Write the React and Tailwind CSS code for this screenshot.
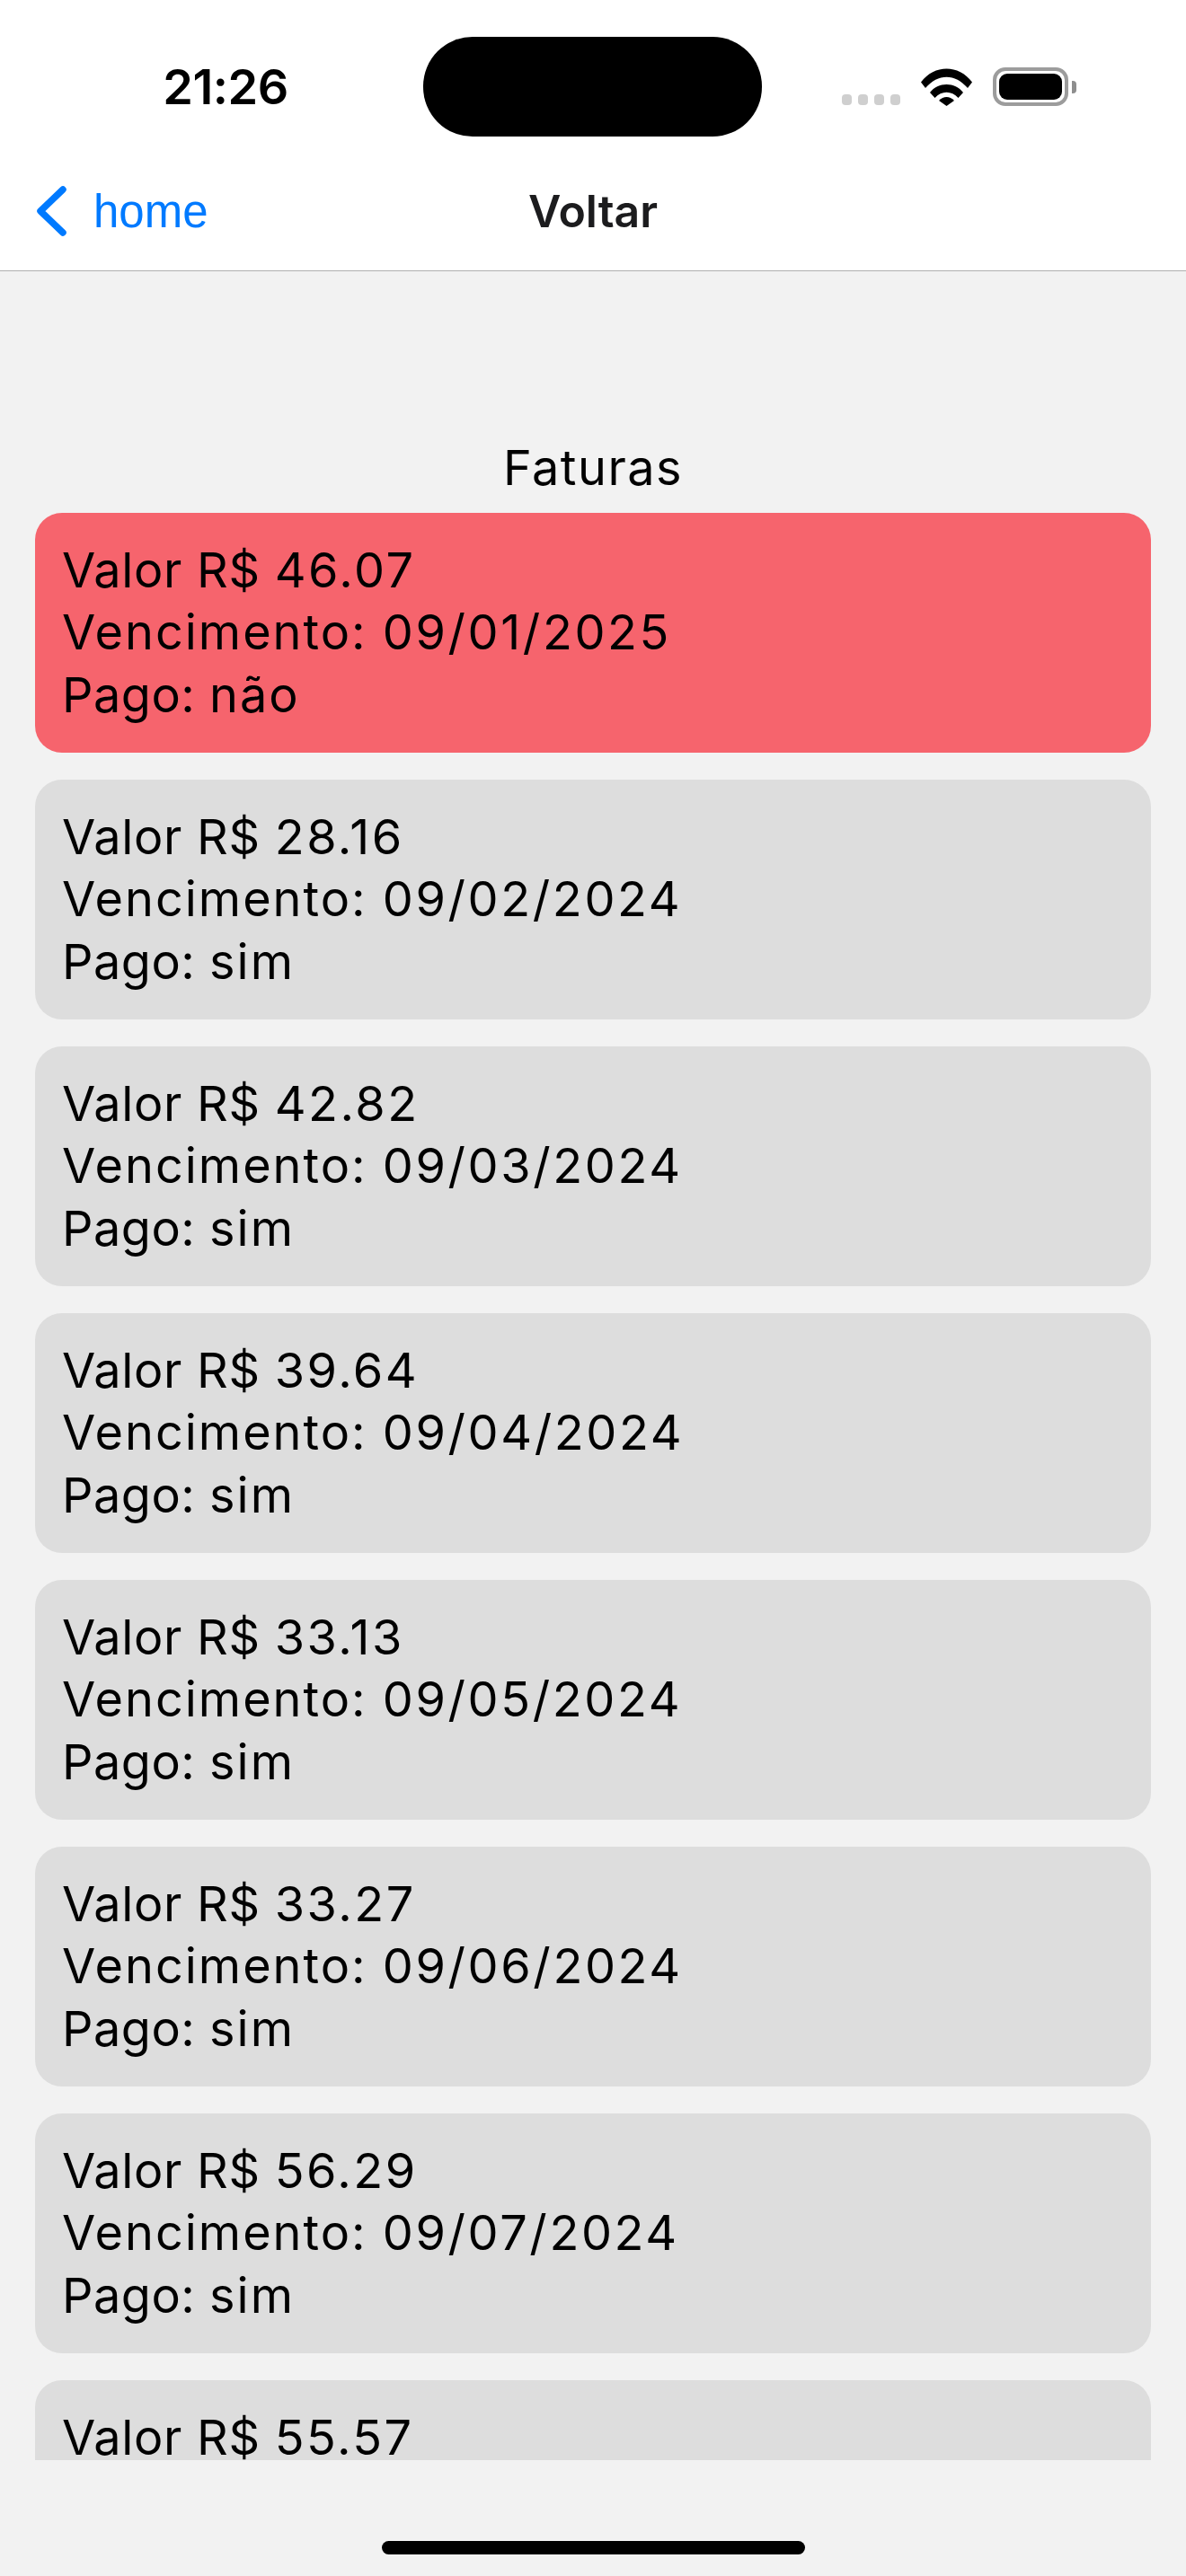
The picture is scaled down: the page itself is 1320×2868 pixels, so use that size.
const rows = [
  ["46.07", "09/01/2025", "não", true],
  ["28.16", "09/02/2024", "sim"],
  ["42.82", "09/03/2024", "sim"],
  ["39.64", "09/04/2024", "sim"],
  ["33.13", "09/05/2024", "sim"],
  ["33.27", "09/06/2024", "sim"],
  ["56.29", "09/07/2024", "sim"],
  ["55.57", "09/08/2024", "sim"],
];

function Wifi() {
  return (
    <svg width="57" height="42" viewBox="0 0 57 42" className="block">
      <path d="M0 15.500 C15 -4.500 42 -4.500 57 15.500 L52 22 C38 5.500 19 5.500 5 22 Z" fill="#000" />
      <path d="M10 27 C19 15 38 15 47 27 L41.500 33 C34 24.500 23 24.500 15.500 33 Z" fill="#000" />
      <path d="M20 36 C25 30.500 32 30.500 37 36 L28.500 42 Z" fill="#000" />
    </svg>
  );
}

function Battery() {
  return (
    <div className="flex items-center">
      <div className="w-[84px] h-[43px] rounded-[14px] border-[4px] border-[#9c9c9c] p-[3px] box-border">
        <div className="w-full h-full rounded-[9px] bg-black" />
      </div>
      <div className="ml-[4px] w-[5px] h-[14px] rounded-r-[4px] bg-[#8e8e8e]" />
    </div>
  );
}

export default function App() {
  return (
    <div className="w-[1320px] h-[2868px] bg-[#f2f2f2] flex flex-col overflow-hidden" style={{ fontFamily: "Inter, sans-serif" }}>
      <header className="h-[302px] shrink-0 bg-white border-b border-[#b0b0b0] box-border flex flex-col">
        <div className="relative h-[196px] pt-[41px] flex items-start">
          <div className="w-[471px] h-[111px] flex items-center justify-center pl-[31px]">
            <span className="text-[54px] leading-none font-semibold text-black tracking-[-0.500px]">21:26</span>
          </div>
          <div className="w-[377px] h-[111px] rounded-[55px] bg-black" />
          <div className="flex items-end ml-[89px] mt-[34px]">
            <div className="flex gap-[7px] mb-[1px]">
              <span className="w-[11px] h-[12px] rounded-[4px] bg-[#cfcfcf]" />
              <span className="w-[11px] h-[12px] rounded-[4px] bg-[#cfcfcf]" />
              <span className="w-[11px] h-[12px] rounded-[4px] bg-[#cfcfcf]" />
              <span className="w-[11px] h-[12px] rounded-[4px] bg-[#cfcfcf]" />
            </div>
            <div className="ml-[23px]"><Wifi /></div>
            <div className="ml-[23px]"><Battery /></div>
          </div>
        </div>
        <div className="relative flex items-center justify-center h-[78px]">
          <div className="absolute left-[40px] top-[11px] flex items-center">
            <svg width="34" height="56" viewBox="0 0 34 56" className="block">
              <path d="M30 4 L5 28 L30 52" fill="none" stroke="#007aff" strokeWidth="7.500" strokeLinecap="round" strokeLinejoin="round" />
            </svg>
            <span className="ml-[30px] text-[51px] leading-none text-[#007aff]" style={{ fontFamily: "'Liberation Sans', sans-serif" }}>home</span>
          </div>
          <span className="text-[50px] leading-none font-semibold text-[#1c1c1e]">Voltar</span>
        </div>
      </header>
      <main className="h-[2437px] shrink-0 overflow-hidden px-[39px] pt-[184px]">
        <h1 className="text-center text-[54px] leading-[70px] font-normal text-black tracking-[1.500px] mb-[15px]">Faturas</h1>
        <div className="flex flex-col gap-[30px]">
          {rows.map(([v, d, p, red]) => (
            <div key={d} className={`h-[267px] shrink-0 rounded-[30px] pl-[30px] pr-[31px] pt-[29px] text-[54px] leading-[69.300px] text-black ${red ? "bg-[#f6646d]" : "bg-[#dddddd]"}`}>
              <div><span className="tracking-[0.700px]">Valor R$ </span><span className="tracking-[2.500px]">{v}</span></div>
              <div><span className="tracking-[2px]">Vencimento: </span><span className="tracking-[2.600px]">{d}</span></div>
              <div><span className="tracking-[0.500px]">Pago: </span><span className="tracking-[2px]">{p}</span></div>
            </div>
          ))}
        </div>
      </main>
      <div className="flex-1 flex justify-center pt-[90px]">
        <div className="w-[471px] h-[15px] rounded-[8px] bg-black" />
      </div>
    </div>
  );
}
